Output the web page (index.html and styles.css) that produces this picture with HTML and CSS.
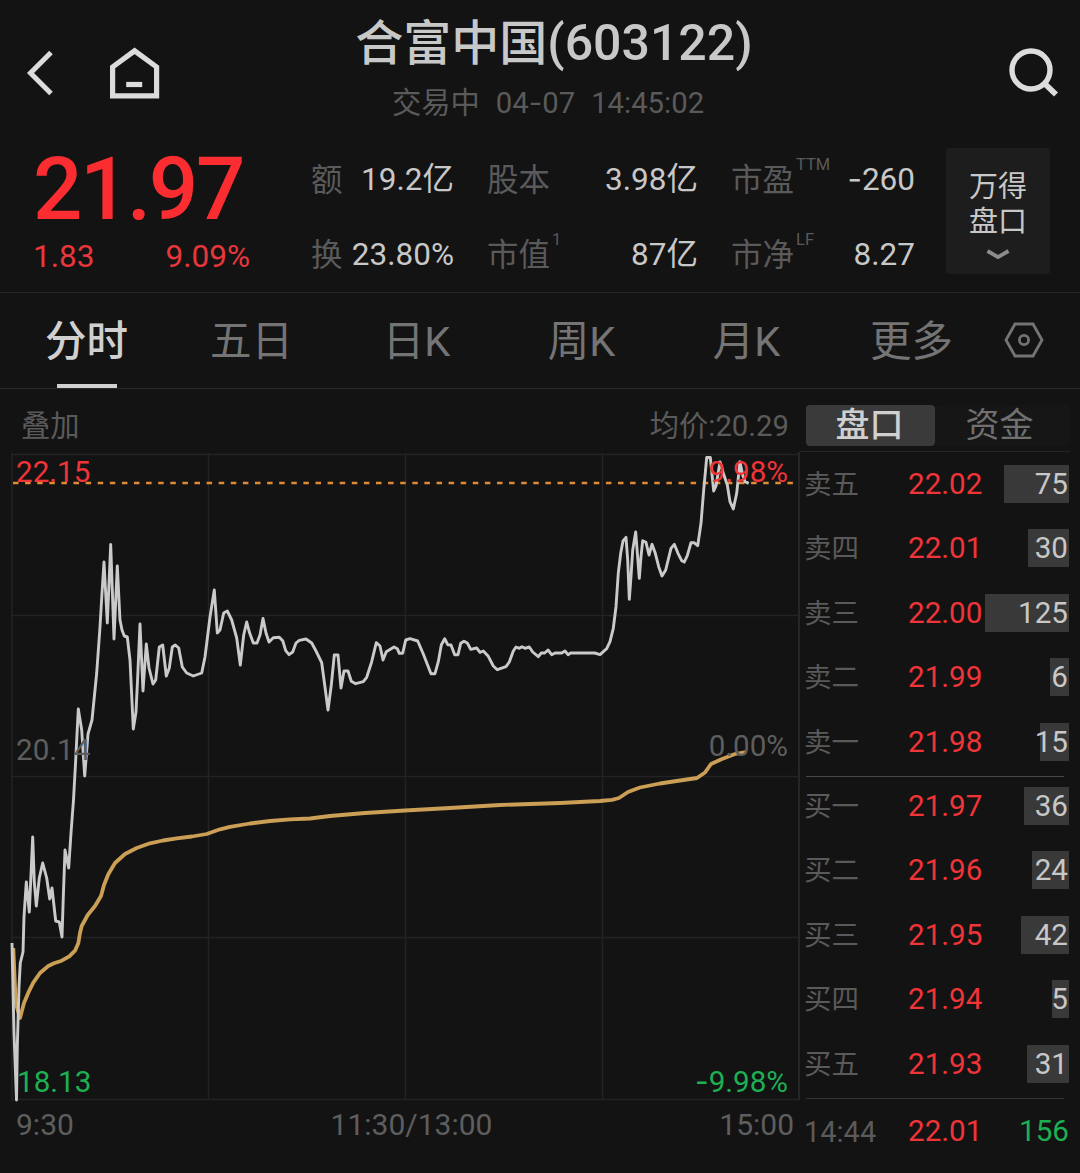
FILE: index.html
```html
<!DOCTYPE html>
<html lang="zh-CN">
<head>
    <meta charset="UTF-8">
    <meta name="viewport" content="width=device-width, initial-scale=1.0">
    <title>合富中国(603122)</title>
    <link rel="stylesheet" href="styles.css">
</head>
<body>
    <header class="header">
        <div class="header-left">
            <svg class="icon-back" width="28" height="46" viewBox="0 0 28 46" fill="none" stroke="#dcdcdc" stroke-width="5">
                <path d="M25 2.5 L4.5 23 L25 43.5"/>
            </svg>
            <svg class="icon-home" width="50" height="54" viewBox="0 0 50 54" fill="none" stroke="#dcdcdc" stroke-width="5.2">
                <path d="M2.6 48.8 V20 L24.6 3.8 L46.6 20 V48.8 Z"/>
                <path d="M16.2 37.5 H32.2"/>
            </svg>
        </div>
        <div class="header-title">
            <h1>合富中国<span class="code">(603122)</span></h1>
            <p class="status"><span>交易中</span><span>04<i class="dash">-</i>07</span><span>14:45:02</span></p>
        </div>
        <svg class="icon-search" width="50" height="50" viewBox="0 0 50 50" fill="none" stroke="#dcdcdc" stroke-width="5.4">
            <circle cx="22" cy="22" r="19"/>
            <path d="M35 35 L47 46.5" stroke-width="5.8"/>
        </svg>
    </header>

    <section class="quote">
        <div class="price-box">
            <div class="price">21.97</div>
            <div class="change"><span>1.83</span><span>9.09%</span></div>
        </div>
        <div class="metrics">
            <div class="metric"><span class="label">额</span><span>19.2<b>亿</b></span></div>
            <div class="metric"><span class="label">股本</span><span>3.98<b>亿</b></span></div>
            <div class="metric"><span class="label">市盈<sup>TTM</sup></span><span><i class="dash">-</i>260</span></div>
            <div class="metric"><span class="label">换</span><span>23.80%</span></div>
            <div class="metric"><span class="label">市值<sup>1</sup></span><span>87<b>亿</b></span></div>
            <div class="metric"><span class="label">市净<sup>LF</sup></span><span>8.27</span></div>
        </div>
        <div class="wind-btn">
            <span>万得</span>
            <span>盘口</span>
            <svg width="24" height="12" viewBox="0 0 24 12" fill="none" stroke="#8c8c8c" stroke-width="3.8">
                <path d="M1.5 2 L12 8.2 L22.5 2" stroke-linejoin="round"/>
            </svg>
        </div>
    </section>

    <nav class="tabs">
        <a class="tab active">分时</a>
        <a class="tab">五日</a>
        <a class="tab">日K</a>
        <a class="tab">周K</a>
        <a class="tab">月K</a>
        <a class="tab">更多</a>
        <svg class="icon-setting" width="40" height="38" viewBox="0 0 40 38" fill="none" stroke="#747474" stroke-width="2.8">
            <path d="M11 3 H29 L38 19 L29 35 H11 L2 19 Z"/>
            <circle cx="20" cy="19" r="4.6"/>
        </svg>
    </nav>

    <main class="main">
        <div class="chart-panel">
            <div class="chart-bar"><span>叠加</span><span>均价:20.29</span></div>
            <svg class="chart" width="800" height="650" viewBox="0 452 800 650">
                <g class="grid">
                    <path d="M11 454.5 H799 M11 615.5 H799 M11 776.5 H799 M11 937.5 H799 M11 1099.5 H799"/>
                    <path d="M12 453 V1100 M208.5 453 V1100 M405.5 453 V1100 M602.5 453 V1100"/>
                    <path class="edge" d="M799 452 V1100"/>
                </g>
                <path class="last-line" d="M13 483 H794"/>
                <polyline class="avg-line" points="13.3,948 15.7,1003 20,1018 24,1003 28.3,992.7 33.3,982.7 40,973 48.3,966 54,963.3 61.7,960.7 69.3,956.3 75,950.7 78.3,943.3 80,933 81.7,926 87.7,915 95,906 101,896 104,885 108.3,874.3 115,863 125,854 136.7,848 150,843.3 163,840.5 176.7,838.3 192,836.5 206.7,834 220,829.3 230,826.8 250,823.5 270,821 290,819.3 310,818.5 330,816 365,813 405,810.5 450,808 500,805 560,803 600,801 612,799.8 619,798 628,792 640,787.5 660,783.5 680,780.5 697,778 705,772.5 711,764 722,759 735,754 746,752"/>
                <polyline class="price-line" points="12,943 14,1033 16.5,1100 17.3,1047 19,987 20.3,963 23,952 24,917 26.3,882 29.3,912 32.7,837 34.3,882 36.3,906 39.3,878 42.7,863 46.7,878 49.7,899 52,888 55.7,921 59.3,922 62,937 63.3,897 65,850 68.7,868 71,833 73.5,800 75.7,760 78.3,709 81.7,730 84.7,776 88,734 92,720 96.7,673 100,627 102,593 104,562 107.3,623 110.7,544.5 114,639 117.3,566 120,620 122,630 124.3,636 127.3,637 130,660 133.3,729 136,712 137.7,677 140,624 143,691 146.3,644 149,668 153,684 155.7,680 159.3,647 162.7,645 166.3,676 169.3,668 172.3,647 175.3,645 178.7,648 182.3,667 186.7,673 193.3,676 201.7,673 205,657 210,617 214.3,590 217.3,633 220,630 223.7,613 227.3,611 231.7,620 236.7,638 240.3,665 243.7,635 246.7,622 249.3,632 253.3,643 257,643 260,635 263,618.5 266,633 269,642 273.3,637.7 279.3,637.3 282.7,640.7 285.7,650.7 289,654.7 292.7,652 296,643 299.3,640.3 306,639 311.7,643 316,651 321.7,662.7 324.7,685 328,710 331.3,685 334.3,655 338,655 341,688 344,671 348,671 351.3,681.3 355.7,683.7 363.3,681.7 366.7,677.3 371.7,661.7 376.3,642.7 380,646 383,660 386.3,651.7 394,647 397.3,648.7 399.3,653.3 402.7,653.3 405.7,640 410,638.7 417.7,641 423.3,654 431,673.7 435,673.7 438.3,661.7 441.3,645 444.7,638.7 447.7,644.7 451,645 454.7,654.7 458,654.7 460.7,643.3 464,641.3 467.3,643 470.7,649.3 476.7,648 480,652.3 483.3,651 488.3,656.3 493.3,666 497.3,669.7 506,666.7 509.3,662 513.3,651 516,647 519.3,648.3 522,646.7 525,648.3 529.3,647 532.7,652 538.3,656.7 541.3,653 544.7,653 548,650 551.7,654.7 555,653 561.7,653 565,651 568,654.7 570.7,653 594.7,653 600,654.7 606.7,648.7 610,641.7 613.3,628.3 616,606.7 618.3,573 620.7,553.3 623,541 626,537.3 627.7,560 629.3,599.3 631,576.7 632.7,550 635.7,532 639.3,578.3 641,556.7 642.7,540.7 646,542.3 649,555 652,544.3 655.3,553.3 658.7,566.7 662,576 665.7,570 671,548.3 674.3,544.3 678,553.3 681.7,560.7 684.3,562 687.3,555.7 691,542.7 694,542.7 697.7,545.7 701,523.3 703.7,490 706.7,457.5 710.3,457.5 713.7,491 716,486 720,462 723.3,473.3 727.3,485 730,501.7 733.3,509 736.7,493.3 740,461.7 742.7,475 745,481.7 748.7,483.3"/>
                <g class="scale">
                    <text class="up" x="16" y="482">22.15</text>
                    <text class="up" x="788" y="482" text-anchor="end">9.98%</text>
                    <text class="flat" x="16" y="760">20.14</text>
                    <text class="flat" x="788" y="756" text-anchor="end">0.00%</text>
                    <text class="down" x="17" y="1092">18.13</text>
                    <text class="down" x="788" y="1092" text-anchor="end"><tspan class="dash">-</tspan>9.98%</text>
                </g>
            </svg>
            <div class="times"><span>9:30</span><span>11:30/13:00</span><span>15:00</span></div>
        </div>

        <aside class="book">
            <div class="book-tabs"><span class="book-tab active">盘口</span><span class="book-tab">资金</span></div>
            <div class="book-group sell">
                <div class="level"><span class="name">卖五</span><span class="up">22.02</span><span class="vol" style="width: 65px">75</span></div>
                <div class="level"><span class="name">卖四</span><span class="up">22.01</span><span class="vol" style="width: 41px">30</span></div>
                <div class="level"><span class="name">卖三</span><span class="up">22.00</span><span class="vol" style="width: 84px">125</span></div>
                <div class="level"><span class="name">卖二</span><span class="up">21.99</span><span class="vol" style="width: 19px">6</span></div>
                <div class="level"><span class="name">卖一</span><span class="up">21.98</span><span class="vol" style="width: 29px">15</span></div>
            </div>
            <div class="book-group buy">
                <div class="level"><span class="name">买一</span><span class="up">21.97</span><span class="vol" style="width: 45px">36</span></div>
                <div class="level"><span class="name">买二</span><span class="up">21.96</span><span class="vol" style="width: 37px">24</span></div>
                <div class="level"><span class="name">买三</span><span class="up">21.95</span><span class="vol" style="width: 48px">42</span></div>
                <div class="level"><span class="name">买四</span><span class="up">21.94</span><span class="vol" style="width: 17px">5</span></div>
                <div class="level"><span class="name">买五</span><span class="up">21.93</span><span class="vol" style="width: 42px">31</span></div>
            </div>
            <div class="level trade"><span class="name">14:44</span><span class="up">22.01</span><span class="down">156</span></div>
        </aside>
    </main>
</body>
</html>
```

FILE: styles.css
```css
* {
    box-sizing: border-box;
}

body {
    margin: 0;
    width: 1080px;
    height: 1173px;
    overflow: hidden;
    background: #131313;
    color: #c8c8c8;
    font-family: Roboto, "Noto Sans CJK SC", sans-serif;
    font-size: 30px;
    line-height: 40px;
}

svg {
    display: block;
    flex: none;
}

/* the hyphen of Roboto is too short for signs and dates */
.dash {
    font-family: Inter, sans-serif;
    font-style: normal;
}

.up {
    color: #f03438;
    fill: #f03438;
}

.down {
    color: #1db053;
    fill: #1db053;
}

.flat {
    fill: #5e5e5e;
}

/* Header */
.header {
    display: grid;
    grid-template-columns: 200px 1fr 172px;
    height: 142px;
}

.header-left {
    display: flex;
    align-items: flex-start;
    gap: 56px;
    padding: 47px 0 0 26px;
}

.icon-back {
    margin-top: 3px;
}

.icon-search {
    margin: 48px 0 0 101px;
}

.header-title {
    text-align: center;
}

h1 {
    margin: 0;
    padding-top: 13px;
    font-size: 48px;
    font-weight: 500;
    line-height: 60px;
    white-space: nowrap;
}

.code {
    font-size: 50px;
}

.status {
    display: flex;
    justify-content: center;
    gap: 16px;
    margin: 0;
    padding: 9px 12px 0 0;
    font-size: 29.3px;
    color: #5a5a5a;
}

/* Quote */
.quote {
    display: flex;
    height: 151px;
    border-bottom: 1px solid #262626;
}

.price-box {
    width: 312px;
    padding: 10px 62px 0 33px;
}

.price {
    height: 75px;
    font-size: 87px;
    font-weight: 500;
    line-height: 74px;
    letter-spacing: -2.4px;
    color: #fb2d31;
}

.change {
    display: flex;
    justify-content: space-between;
    padding-top: 10px;
    font-size: 31.5px;
    color: #e8373b;
}

.metrics {
    display: grid;
    grid-template-columns: 142px 210px 183px;
    column-gap: 34px;
    grid-auto-rows: 75px;
    width: 603px;
    font-size: 31.5px;
}

.metric {
    display: flex;
    justify-content: space-between;
    align-items: center;
    white-space: nowrap;
}

.metric b {
    font-weight: 400;
}

.label {
    padding-top: 2px;
    margin-left: -1px;
    color: #5a5a5a;
}

sup {
    font-size: 16.5px;
    line-height: 0;
    vertical-align: 21px;
    margin-left: 2px;
}

.wind-btn {
    display: flex;
    flex-direction: column;
    align-items: center;
    width: 104px;
    height: 126px;
    margin: 6px 0 0 31px;
    padding-top: 22px;
    border-radius: 3px;
    background: #1d1d1d;
    font-size: 29px;
    line-height: 35px;
}

.wind-btn svg {
    margin-top: 9px;
}

/* Period tabs */
.tabs {
    display: flex;
    align-items: center;
    height: 96px;
    padding-left: 4px;
    border-bottom: 1px solid #292929;
}

.tab {
    display: flex;
    flex-direction: column;
    align-items: center;
    width: 165px;
    height: 95px;
    padding-top: 20px;
    font-size: 41.5px;
    line-height: 58px;
    color: #747474;
}

.tab.active {
    color: #d0d0d0;
    font-weight: 500;
}

.tab.active::after {
    content: "";
    width: 60px;
    height: 4px;
    margin-top: 13px;
    background: #d0d0d0;
}

.icon-setting {
    margin: -2px 0 0 10px;
}

/* Chart */
.main {
    display: flex;
}

.chart-panel {
    width: 800px;
}

.chart-bar {
    display: flex;
    justify-content: space-between;
    height: 63px;
    padding: 17px 11px 0 21px;
    font-size: 29.3px;
    color: #5a5a5a;
}

.grid path {
    fill: none;
    stroke: #232323;
    stroke-width: 1.5;
}

.grid .edge {
    stroke: #262626;
    stroke-width: 2;
}

.last-line {
    stroke: #e08a35;
    stroke-width: 2.6;
    stroke-dasharray: 5.5 6.6;
}

.price-line,
.avg-line {
    fill: none;
    stroke: #cacaca;
    stroke-width: 2.9;
    stroke-linejoin: round;
}

.avg-line {
    stroke: #cb9f55;
    stroke-width: 3.8;
}

.scale {
    font-size: 29.6px;
}

.times {
    display: grid;
    grid-template-columns: 1fr 1fr 1fr;
    padding: 3px 6px 0 16px;
    color: #5e5e5e;
}

.times span:nth-child(2) {
    padding-left: 13px;
    text-align: center;
}

.times span:last-child {
    text-align: right;
}

/* Order book */
.book {
    width: 270px;
    padding-left: 6px;
}

.book-tabs {
    display: flex;
    height: 63px;
    margin-left: -6px;
    padding: 16px 0 5px 6px;
    border-bottom: 1px solid #242424;
}

.book-tab {
    flex: 1;
    height: 41px;
    padding-right: 6px;
    border-radius: 4px;
    background: #161616;
    font-size: 34px;
    line-height: 40px;
    text-align: center;
    color: #707070;
}

.book-tab.active {
    flex: none;
    width: 129px;
    padding-right: 2px;
    background: #3a3a3a;
    color: #d0d0d0;
    font-weight: 500;
}

.book-group {
    display: flex;
    flex-direction: column;
    gap: 14.4px;
    width: 258px;
    padding: 7px 0 9.4px;
    border-bottom: 1px solid #474747;
}

.book-group.buy {
    padding-top: 4px;
    border-color: #333;
}

.level {
    display: grid;
    grid-template-columns: 104px 76px 85px;
    align-items: center;
    height: 50px;
    margin-left: -2px;
    font-size: 29.6px;
}

.name {
    padding-top: 2px;
    font-size: 27.5px;
    color: #5a5a5a;
}

.vol {
    display: flex;
    justify-content: flex-end;
    justify-self: end;
    height: 38px;
    padding-right: 1px;
    background: #393939;
    line-height: 38px;
}

.trade {
    margin-top: 7px;
}

.trade .name {
    font-size: 29px;
}

.trade .down {
    text-align: right;
}
```
